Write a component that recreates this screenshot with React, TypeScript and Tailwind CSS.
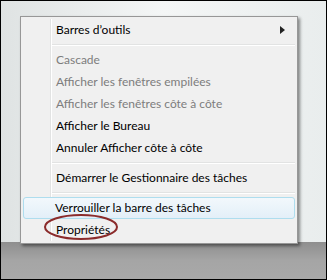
import React from "react";

const Item = ({ label, disabled, arrow }: { label: string; disabled?: boolean; arrow?: boolean }) => (
  <div className="flex h-[22px] items-center pl-[35px] pr-[12px]">
    <span className={disabled ? "text-[#7d7d7d]" : "text-black"}>{label}</span>
    {arrow && (
      <svg className="ml-auto" width="5" height="8" viewBox="0 0 5 8">
        <path d="M0 0 L5 4 L0 8 Z" fill="#222" />
      </svg>
    )}
  </div>
);

const Sep = () => (
  <div className="flex h-[8px] items-center pl-[31px] pr-[2px]">
    <div className="h-[2px] w-full border-t border-[#e2e3e3] border-b-white border-b" />
  </div>
);

export default function App() {
  return (
    <div
      className="relative h-[280px] w-[327px] overflow-hidden border border-black bg-gradient-to-r from-[#dfe3e3] via-[#f4f6f6] to-[#e9eded] text-[12px]"
      style={{ fontFamily: 'Lato, "Liberation Sans", sans-serif' }}
    >
      <div className="absolute bottom-0 left-0 right-0 top-[241px] bg-gradient-to-b from-[#8e8e8e] via-[#a5a5a5] to-[#a9a9a9]" />
      <div className="absolute left-[19px] top-[15px] w-[278px] border border-[#979797] bg-[#f0f0f0] py-[2px] shadow-[2px_2px_3px_rgba(0,0,0,0.45)]">
        <div className="absolute bottom-[2px] left-[29px] top-[2px] w-[2px] border-l border-[#e2e3e3] border-r border-r-white" />
        <div className="relative">
          <Item label="Barres d’outils" arrow />
          <Sep />
          <Item label="Cascade" disabled />
          <Item label="Afficher les fenêtres empilées" disabled />
          <Item label="Afficher les fenêtres côte à côte" disabled />
          <Item label="Afficher le Bureau" />
          <Item label="Annuler Afficher côte à côte" />
          <Sep />
          <Item label="Démarrer le Gestionnaire des tâches" />
          <Sep />
          <div className="mx-[2px] flex h-[22px] items-center rounded-[3px] border border-[#aeddee] bg-gradient-to-b from-[#f2f8fc] to-[#e3eff8] pl-[31px]">
            <span className="text-black">Verrouiller la barre des tâches</span>
          </div>
          <Item label="Propriétés" />
        </div>
      </div>
      <svg className="absolute left-[42px] top-[212px]" width="76" height="28" viewBox="0 0 76 28">
        <ellipse cx="38" cy="14" rx="36" ry="12" fill="none" stroke="#8b2b2b" strokeWidth="2" />
      </svg>
    </div>
  );
}
